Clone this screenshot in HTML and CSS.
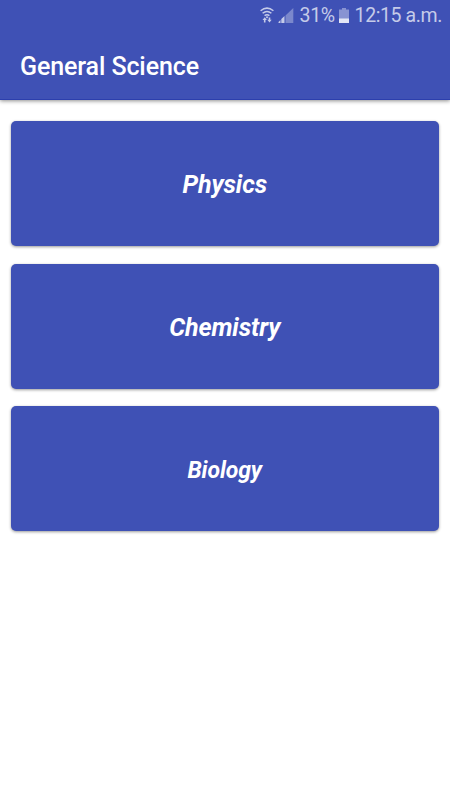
FILE: index.html
```html
<!DOCTYPE html>
<html lang="en">
<head>
  <meta charset="UTF-8">
  <title>General Science</title>
  <meta name="viewport" content="width=device-width, initial-scale=1.0">
  <link rel="stylesheet" href="styles.css">
</head>
<body>
  <header class="app-bar">
    <!-- Status bar -->
    <div class="status-bar">
      <svg class="icon-wifi" width="14" height="16" viewBox="0 0 14 16">
        <path d="M.6 3.800Q7 -1.600 13.400 3.800M2.600 6.300Q7 2.600 11.400 6.300M4.600 8.700Q7 6.700 9.400 8.700" fill="none" stroke="currentColor" stroke-width="1.500"/>
        <path d="M7 9l1.300 1.300L7 11.500 5.700 10.300z" fill="currentColor"/>
        <path d="M2.500 13L4.700 10.300 6.900 13H5.500v2.500H3.900V13zM7.300 12.800h1.400v-2.300h1.600v2.300h1.400L9.500 15.500z" fill="currentColor"/>
      </svg>
      <svg class="icon-signal" width="16" height="15" viewBox="0 0 16 15">
        <path d="M7.500 7.500L15.300 0V15H7.500z" fill="currentColor" opacity="0.45"/>
        <path d="M.5 15v-1l2-2v3zM3.300 15v-4L6.500 8v7z" fill="currentColor"/>
      </svg>
      <span class="percent">31%</span>
      <svg class="icon-battery" width="10" height="15" viewBox="0 0 10 15">
        <path d="M3 0h4v1.500h3V11H0V1.500h3z" fill="currentColor" opacity="0.55"/>
        <path class="charge" d="M0 10.500h10V15H0z"/>
      </svg>
      <span class="time">12:15 a.m.</span>
    </div>
    <h1>General Science</h1>
  </header>

  <main class="subjects">
    <button class="card">Physics</button>
    <button class="card">Chemistry</button>
    <button class="card small">Biology</button>
  </main>
</body>
</html>
```

FILE: styles.css
```css
* {
  margin: 0;
  padding: 0;
  box-sizing: border-box;
  font-family: Roboto, sans-serif;
}

body {
  background: #ffffff;
  min-height: 100vh;
}

.app-bar {
  height: 100px;
  background: #3f51b5;
  color: #ffffff;
  border-bottom: 1px solid #2c3fad;
  box-shadow: 0 1px 4px rgba(0,0,0,0.45);
}

.status-bar {
  height: 30px;
  padding-right: 8px;
  display: flex;
  justify-content: flex-end;
  align-items: center;
  color: #c5cbe9;
  font-size: 19.5px;
  letter-spacing: -0.4px;
}

.percent, .time {
  padding-top: 1px;
}

.icon-signal {
  margin: 0 6px 0 4px;
}

.icon-battery {
  margin: 0 6px 0 4px;
}

.icon-battery .charge {
  fill: #e3e6f5;
}

.app-bar h1 {
  padding-left: 20px;
  font-size: 25px;
  line-height: 74px;
  font-weight: 500;
  letter-spacing: -0.1px;
}

.subjects {
  display: flex;
  flex-direction: column;
  gap: 17.5px;
  padding: 21.3px 11.5px 21px 11px;
}

.card {
  height: 125px;
  padding-top: 2px;
  border: none;
  border-radius: 5px;
  background: #3f51b5;
  box-shadow: 0 1px 3px rgba(0,0,0,0.4);
  color: #ffffff;
  font-size: 25px;
  font-weight: bold;
  font-style: italic;
  letter-spacing: -0.1px;
}

.card.small {
  padding-top: 3px;
  font-size: 23px;
}
```
